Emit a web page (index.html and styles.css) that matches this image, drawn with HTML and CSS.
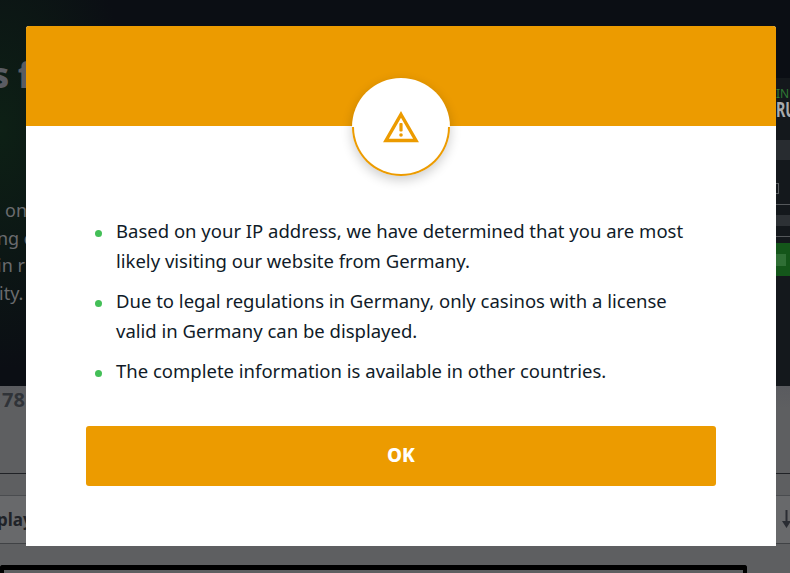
FILE: index.html
```html
<!DOCTYPE html>
<html lang="en">
<head>
  <meta charset="UTF-8" />
  <meta name="viewport" content="width=device-width, initial-scale=1.0"/>
  <title>Notice</title>
  <link rel="stylesheet" href="styles.css">
</head>
<body>

<!-- Page behind the dialog -->
<div class="page">
  <section class="hero">
    <div class="hero-copy">
      <h1 class="hero-title">s f</h1>
      <p class="hero-text"><span class="first-line">on</span><br>ng c<br>in r<br><span class="last-line">ity.</span></p>
    </div>
    <div class="hero-preview">
      <div class="brand-small">IN</div>
      <div class="brand-big">RU</div>
      <div class="preview-bar"></div>
      <div class="preview-box"></div>
      <div class="preview-line"></div>
      <div class="preview-bar preview-bar-low"></div>
      <div class="preview-line"></div>
      <div class="preview-cta"><span class="cta-inner"></span></div>
    </div>
  </section>
  <div class="count-strip"><span class="count-text">78</span></div>
  <div class="gap-strip"></div>
  <div class="sort-row">
    <span class="sort-label">play</span>
    <svg class="sort-arrow" width="9" height="18" viewBox="0 0 9 18">
      <path d="M3.5 0 H5.5 V11 H9 L4.5 18 L0 11 H3.5 Z" fill="#2a2d33"/>
    </svg>
  </div>
  <div class="card-edge"></div>
</div>

<!-- Dialog -->
<div class="modal">
  <div class="modal-head">
    <div class="modal-badge">
      <svg class="warn-icon" width="36" height="32" viewBox="0 0 36 32">
        <path d="M18 3.5 L33 29.5 H3 Z" fill="none" stroke="#ec9b00" stroke-width="3.4" stroke-linejoin="miter"/>
        <rect x="16.4" y="12" width="3.2" height="8.5" rx="1" fill="#ec9b00"/>
        <circle cx="18" cy="24" r="1.8" fill="#ec9b00"/>
      </svg>
    </div>
  </div>
  <div class="modal-body">
    <ul class="notice-list">
      <li>Based on your IP address, we have determined that you are most likely visiting our website from Germany.</li>
      <li>Due to legal regulations in Germany, only casinos with a license valid in Germany can be displayed.</li>
      <li>The complete information is available in other countries.</li>
    </ul>
    <button class="ok-btn">OK</button>
  </div>
</div>

</body>
</html>
```

FILE: styles.css
```css
* {
  box-sizing: border-box;
}

html, body {
  height: 100%;
}

body {
  margin: 0;
  overflow: hidden;
  font-family: "Noto Sans", sans-serif;
  background: #5e5f61;
}

/* background page */
.page {
  height: 573px;
  overflow: hidden;
}

.hero {
  display: flex;
  justify-content: space-between;
  height: 386px;
  background: radial-gradient(ellipse 130px 240px at 0 130px, #0d2015, rgba(13, 32, 21, 0)), #0b0e14;
}

.hero-copy {
  white-space: nowrap;
}

.hero-title {
  margin: 52px 0 0 -9px;
  font-size: 36px;
  line-height: 46px;
  font-weight: 800;
  word-spacing: -1px;
  color: #5a5c62;
}

.hero-text {
  margin: 99px 0 0 -3px;
  font-size: 18px;
  line-height: 27.5px;
  color: #6a6b6e;
}

.first-line {
  margin-left: 8px;
}

.last-line {
  margin-left: 2px;
}

.hero-preview {
  width: 14px;
  height: 308px;
  margin-top: 78px;
  padding-top: 10px;
  overflow: hidden;
  white-space: nowrap;
  background: #14181c;
}

.brand-small {
  font-size: 12px;
  line-height: 12px;
  color: #2f7a34;
}

.brand-big {
  font-size: 21px;
  line-height: 18px;
  font-weight: 700;
  color: #a9abad;
  transform: scaleX(0.68);
  transform-origin: left center;
}

.preview-bar {
  height: 20px;
  margin-top: 22px;
  background: #282c30;
}

.preview-bar-low {
  height: 11px;
  margin-top: 10px;
  background: #2d3135;
}

.preview-box {
  width: 3px;
  height: 11px;
  margin-top: 23px;
  border: 1px solid #5a5d60;
  border-left: 0;
}

.preview-line {
  height: 1px;
  margin-top: 10px;
  background: #55585b;
}

.preview-cta {
  display: flex;
  align-items: center;
  height: 33px;
  margin-top: 6px;
  background: #14561a;
}

.cta-inner {
  width: 10px;
  height: 12px;
  background: #2f6f35;
}

.count-strip {
  height: 88px;
  border-bottom: 1px solid #202226;
  background: linear-gradient(#5a5b5f, #5e5f61 22px);
}

.count-text {
  display: block;
  padding: 1px 0 0 2px;
  font-size: 20px;
  line-height: 26px;
  font-weight: 700;
  color: #303338;
}

.gap-strip {
  height: 21px;
  background: #5e5f61;
}

.sort-row {
  display: flex;
  justify-content: space-between;
  align-items: center;
  height: 49px;
  border-top: 1px solid #4a4c4f;
  border-bottom: 1px solid #404245;
  background: #68696b;
}

.sort-label {
  margin-left: -3px;
  font-size: 17px;
  font-weight: 700;
  color: #202328;
}

.sort-arrow {
  margin-right: -1px;
  margin-top: -2px;
}

.card-edge {
  width: 747px;
  height: 30px;
  margin-top: 21px;
  border: 4px solid #000;
  border-top-width: 5px;
  border-bottom: 0;
  border-radius: 3px 3px 0 0;
  background: #5e5f61;
}

/* dialog */
.modal {
  position: fixed;
  left: 26px;
  top: 26px;
  width: 750px;
  height: 520px;
  background: #fff;
  border-radius: 3px 3px 0 0;
}

.modal-head {
  display: flex;
  justify-content: center;
  height: 100px;
  padding-top: 52px;
  background: #ec9b00;
  border-radius: 3px 3px 0 0;
}

.modal-badge {
  display: flex;
  align-items: center;
  justify-content: center;
  flex: none;
  width: 98px;
  height: 98px;
  border: 2px solid transparent;
  border-radius: 50%;
  background: linear-gradient(#fff, #fff) padding-box, linear-gradient(#fff 50%, #ec9b00 50%) border-box;
  box-shadow: 0 4px 12px rgba(0, 0, 0, 0.2);
}

.modal-body {
  padding: 90px 60px 0;
}

.notice-list {
  margin: 0 0 40px;
  padding: 0 15px 0 0;
  list-style: none;
  font-size: 18.5px;
  line-height: 30px;
  color: #101b28;
}

.notice-list li {
  position: relative;
  padding-left: 30px;
  margin-bottom: 10px;
}

.notice-list li:last-child {
  margin-bottom: 0;
}

.notice-list li::before {
  content: "";
  position: absolute;
  left: 9px;
  top: 14px;
  width: 7px;
  height: 7px;
  border-radius: 50%;
  background: #43bf57;
}

.ok-btn {
  display: block;
  width: 100%;
  height: 60px;
  padding: 0 0 2px;
  border: 0;
  border-radius: 3px;
  background: #ec9b00;
  color: #fff;
  font-family: "Noto Sans", sans-serif;
  font-size: 19px;
  font-weight: 800;
}
```
